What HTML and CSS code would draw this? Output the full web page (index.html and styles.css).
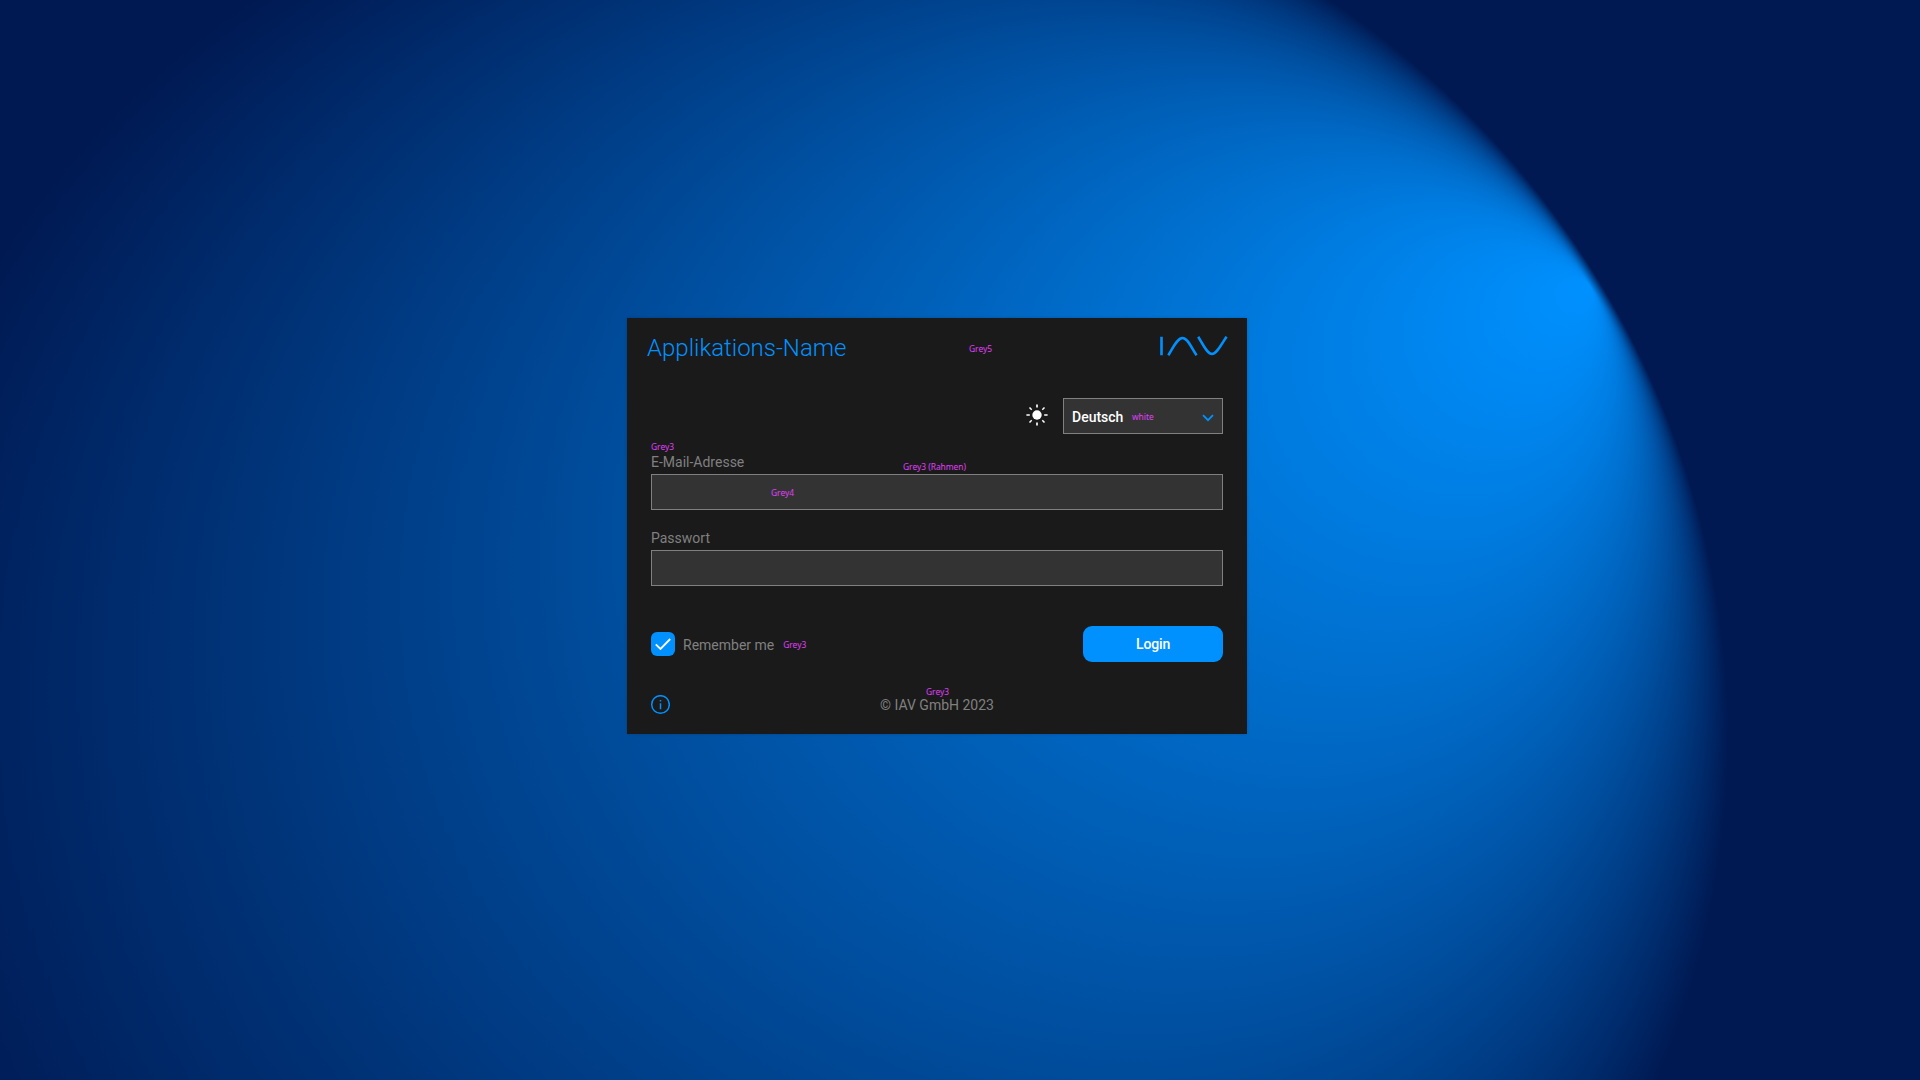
FILE: index.html
```html
<!DOCTYPE html>
<html lang="de">
<head>
<meta charset="utf-8">
<title>Applikations-Name – Login</title>
<link rel="stylesheet" href="styles.css">
</head>
<body>
<svg class="backdrop" viewBox="0 0 1920 1080" preserveAspectRatio="none" aria-hidden="true">
  <defs>
    <radialGradient id="glow" gradientUnits="userSpaceOnUse" cx="0" cy="0" r="1" fx="0.853" fy="-0.500" gradientTransform="translate(790 738) scale(938 903)">
      <stop offset="0" stop-color="#0091ff"/>
      <stop offset="1" stop-color="#001952"/>
    </radialGradient>
  </defs>
  <rect width="1920" height="1080" fill="url(#glow)"/>
</svg>
<main class="page">
  <form class="card">
    <header class="card-header">
      <h1 class="title">Applikations-Name</h1>
      <svg class="logo" width="68" height="20" viewBox="0 0 68 20" aria-label="IAV">
        <path d="M1.500 .7V19.300M8.300 19.300C12.300 13.500 17 2 22.500 2S32.300 13.500 36.600 19.300M38.200 .7C42 6.500 47 18 52 18S62.200 6.500 66.600 .7"/>
      </svg>
      <span class="note note-card">Grey5</span>
    </header>
    <div class="toolbar">
      <svg class="sun" width="22" height="22" viewBox="0 0 22 22" aria-hidden="true">
        <circle cx="11" cy="11" r="4.700"/>
        <path class="rays" d="M11 .4V3.600M11 18.400V21.600M.4 11H3.800M18.200 11H21.600"/>
        <path class="diagonals" d="M3.500 3.500L5.700 5.700M16.300 16.300L18.500 18.500M3.500 18.500L5.700 16.300M16.300 5.700L18.500 3.500"/>
      </svg>
      <div class="select">
        <span class="select-value">Deutsch</span>
        <svg class="chevron" width="12" height="8" viewBox="0 0 12 8" aria-hidden="true"><path d="M1 1.200L6 6.200L11 1.200"/></svg>
        <span class="note note-value">white</span>
      </div>
    </div>
    <div class="field">
      <label class="label" for="email">E-Mail-Adresse</label>
      <input class="input" id="email" type="text">
      <span class="note note-label">Grey3</span>
      <span class="note note-border">Grey3 (Rahmen)</span>
      <span class="note note-fill">Grey4</span>
    </div>
    <div class="field">
      <label class="label" for="password">Passwort</label>
      <input class="input" id="password" type="password">
    </div>
    <div class="actions">
      <span class="checkbox">
        <svg width="24" height="24" viewBox="0 0 24 24" aria-hidden="true"><path d="M4.800 12.300L9.500 17L19.200 7"/></svg>
      </span>
      <span class="remember">Remember me</span>
      <span class="note note-remember">Grey3</span>
      <button class="login" type="button">Login</button>
    </div>
    <footer class="footer">
      <svg class="info" width="20" height="20" viewBox="0 0 20 20" aria-hidden="true">
        <circle cx="10.500" cy="9.500" r="8.800"/>
        <path d="M10.500 4.900V6.500M10.500 8.300V14.300"/>
      </svg>
      <span class="copyright">© IAV GmbH 2023</span>
      <span class="note note-footer">Grey3</span>
    </footer>
  </form>
</main>
</body>
</html>
```
FILE: styles.css
```css
* {
  box-sizing: border-box;
}

body {
  margin: 0;
  background: #001952;
  font: 14px/20px Roboto, sans-serif;
  color: #808080;
  overflow: hidden;
}

.backdrop {
  position: absolute;
  inset: 0;
  width: 100%;
  height: 100%;
}

.page {
  position: relative;
  height: 1080px;
  display: grid;
  grid-template-columns: 620px;
  align-content: start;
  padding: 318px 0 0 627px;
}

.card {
  height: 416px;
  padding: 16px 24px 0;
  background: #1a1a1a;
  box-shadow: 0 0 3px rgba(0, 0, 0, 0.2);
}

.card-header {
  position: relative;
  display: flex;
  justify-content: space-between;
  align-items: flex-start;
  height: 64px;
  margin: 0 -5px 0 -4px;
}

.title {
  margin: -1px 0 0;
  font-size: 24px;
  font-weight: 300;
  line-height: 30px;
  color: #0091ff;
}

.logo {
  margin-top: 2px;
  fill: none;
  stroke: #0091ff;
  stroke-width: 2.6;
}

.toolbar {
  display: flex;
  justify-content: flex-end;
  align-items: center;
  gap: 15px;
  height: 36px;
}

.sun {
  margin-top: -2px;
  fill: #fff;
  stroke: #fff;
}

.sun circle {
  stroke: none;
}

.rays {
  stroke-width: 1.7;
}

.diagonals {
  stroke-width: 1.5;
}

.select {
  position: relative;
  display: flex;
  align-items: center;
  justify-content: space-between;
  width: 160px;
  height: 36px;
  padding: 0 8px;
  border: 1px solid #808080;
  background: #333;
}

.select-value {
  margin-top: 2px;
  font-weight: 500;
  color: #fff;
}

.chevron {
  margin-top: 4px;
  fill: none;
  stroke: #0091ff;
  stroke-width: 1.8;
}

.field {
  position: relative;
  display: flex;
  flex-direction: column;
  gap: 2px;
  margin-top: 18px;
}

.input {
  display: block;
  width: 100%;
  height: 36px;
  padding: 0 8px;
  border: 1px solid #808080;
  border-radius: 0;
  background: #333;
  color: #fff;
  font: inherit;
}

.actions {
  display: flex;
  align-items: center;
  height: 36px;
  margin-top: 40px;
}

.checkbox {
  width: 24px;
  height: 24px;
  border-radius: 6px;
  background: #0091ff;
}

.checkbox svg {
  display: block;
  fill: none;
  stroke: #fff;
  stroke-width: 1.8;
}

.remember {
  margin: 2px 9px 0 8px;
}

.login {
  width: 140px;
  height: 36px;
  margin-left: auto;
  padding: 0;
  border: 0;
  border-radius: 9px;
  background: #0091ff;
  color: #fff;
  font: 500 14px/20px Roboto, sans-serif;
  letter-spacing: -0.15px;
}

.footer {
  position: relative;
  display: grid;
  grid-template-columns: 20px 1fr 20px;
  align-items: center;
  height: 20px;
  margin-top: 33px;
}

.info {
  margin: -1px 0 0 -1px;
  fill: none;
  stroke: #0091ff;
  stroke-width: 1.5;
}

.copyright {
  text-align: center;
}

.note {
  font: 8.4px/12px "Noto Sans", sans-serif;
  color: #e040fb;
  white-space: nowrap;
}

.note-remember {
  margin-top: 1px;
}

.note-card,
.note-value,
.note-label,
.note-border,
.note-fill,
.note-footer {
  position: absolute;
}

.note-card {
  left: 322px;
  top: 9px;
}

.note-value {
  left: 68px;
  top: 12px;
}

.note-label {
  left: 0;
  top: -11px;
}

.note-border {
  left: 252px;
  top: 9px;
}

.note-fill {
  left: 120px;
  top: 35px;
}

.note-footer {
  left: 275px;
  top: -9px;
}
```
